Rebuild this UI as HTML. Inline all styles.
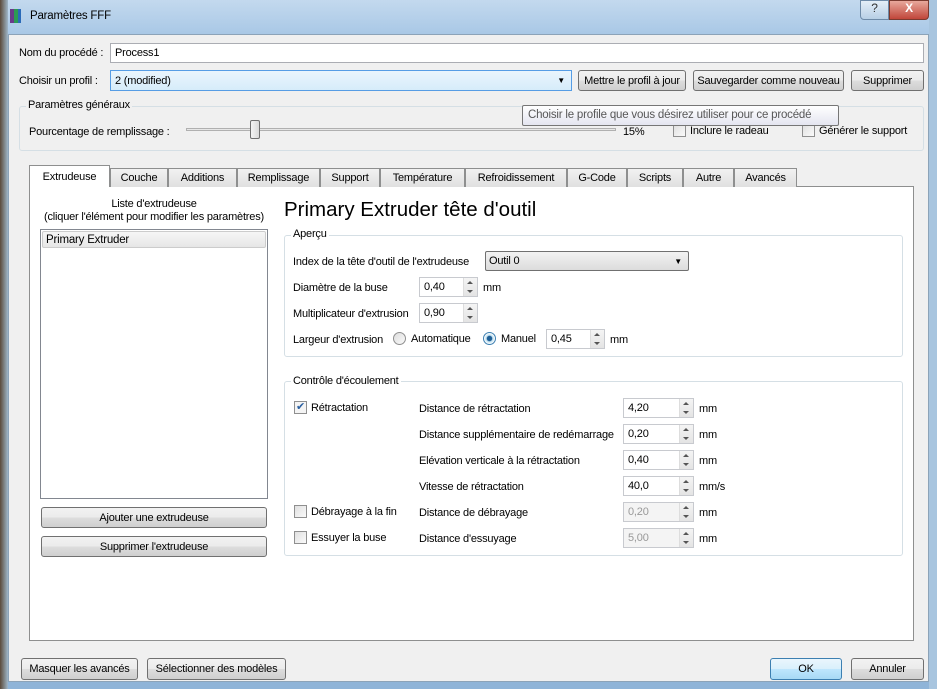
<!DOCTYPE html>
<html><head><meta charset="utf-8"><style>
*{box-sizing:border-box}
body{margin:0;width:937px;height:689px;overflow:hidden;font-family:"Liberation Sans",sans-serif;font-size:11px;letter-spacing:-0.2px;color:#000;position:relative;background:#8fb4d8}
.a{position:absolute;white-space:nowrap}
.btn{position:absolute;white-space:nowrap;border:1px solid #707070;border-radius:3px;background:linear-gradient(#f2f2f2,#ebebeb 50%,#dddddd 51%,#cfcfcf);text-align:center;font-size:11px;padding-top:1px}
.inp{position:absolute;background:#fff;border:1px solid #abadb3;padding-left:4px;padding-top:1px}
.spin{position:absolute;background:#fff;border:1px solid #c8cacf;padding-left:4px;line-height:19px}
.spin i{position:absolute;right:0;top:0;width:14px;height:100%;border-left:1px solid #ddd;background:linear-gradient(#f4f4f4,#e4e4e4)}
.spin i:before{content:"";position:absolute;left:3px;top:3px;border:3px solid transparent;border-bottom:3px solid #555;border-top:0}
.spin i:after{content:"";position:absolute;left:3px;bottom:3px;border:3px solid transparent;border-top:3px solid #555;border-bottom:0}
.dis{color:#999;background:#f4f4f4}
.tab{position:absolute;top:168px;height:19px;border:1px solid #8e8f8f;border-bottom:none;background:linear-gradient(#f2f2f2,#e0e0e0);text-align:center;line-height:19px}
.grp{position:absolute;border:1px solid #d5dfe5;border-radius:3px}
.cb{position:absolute;width:13px;height:13px;border:1px solid #8f8f8f;background:linear-gradient(135deg,#e0e0e0,#fafafa)}
</style></head><body>
<div class="a" style="left:0;top:0;width:937px;height:34px;background:linear-gradient(#c3d9ee,#a9c8e6)"></div>
<div class="a" style="left:0;top:0;width:8px;height:689px;background:linear-gradient(90deg,#5b4a3a,#9fb7c9)"></div>
<div class="a" style="left:929px;top:0;width:8px;height:689px;background:#a8c5df"></div>
<div class="a" style="left:10px;top:9px;width:4px;height:14px;background:#6a3a8a"></div>
<div class="a" style="left:14px;top:9px;width:4px;height:14px;background:#2c9a54"></div>
<div class="a" style="left:18px;top:9px;width:3px;height:14px;background:#2a6ab8"></div>
<div class="a" style="left:30px;top:10px;font-size:11.5px">Paramètres FFF</div>
<div class="a" style="left:860px;top:0;width:29px;height:20px;border:1px solid #6d8aa8;border-radius:0 0 0 4px;background:linear-gradient(#e4eef8,#b7cfe6);text-align:center;font-size:12px;color:#333">?</div>
<div class="a" style="left:889px;top:0;width:40px;height:20px;border:1px solid #7a3a30;border-radius:0 0 4px 0;background:linear-gradient(#e8a89c,#c0463a);text-align:center;font-weight:bold;color:#fff;font-size:12px">X</div>
<div class="a" style="left:8px;top:34px;width:921px;height:648px;background:#f0f0f0;border:1px solid #8ca3b8"></div>

<div class="a" style="left:19px;top:47px">Nom du procédé :</div>
<div class="inp" style="left:110px;top:43px;width:814px;height:20px;line-height:17px">Process1</div>
<div class="a" style="left:19px;top:75px">Choisir un profil :</div>
<div class="inp" style="left:110px;top:70px;width:462px;height:21px;line-height:18px;border-color:#569de5;background:linear-gradient(#eaf5fd,#d6ecfa)">2 (modified)<span style="position:absolute;right:6px;font-size:8px">▼</span></div>
<div class="btn" style="left:578px;top:70px;width:108px;height:21px;line-height:18px">Mettre le profil à jour</div>
<div class="btn" style="left:693px;top:70px;width:151px;height:21px;line-height:18px">Sauvegarder comme nouveau</div>
<div class="btn" style="left:851px;top:70px;width:73px;height:21px;line-height:18px">Supprimer</div>

<div class="grp" style="left:19px;top:106px;width:905px;height:45px"></div>
<div class="a" style="left:26px;top:99px;background:#f0f0f0;padding:0 2px">Paramètres généraux</div>
<div class="a" style="left:29px;top:126px">Pourcentage de remplissage :</div>
<div class="a" style="left:186px;top:128px;width:430px;height:3px;border:1px solid #b0b0b0;background:#e7e7e7"></div>
<div class="a" style="left:250px;top:120px;width:10px;height:19px;border:1px solid #707070;border-radius:2px;background:linear-gradient(90deg,#f4f4f4,#dadada)"></div>
<div class="a" style="left:623px;top:126px">15%</div>
<div class="cb" style="left:673px;top:124px"></div><div class="a" style="left:690px;top:125px">Inclure le radeau</div>
<div class="cb" style="left:802px;top:124px"></div><div class="a" style="left:819px;top:125px">Générer le support</div>
<div class="a" style="left:522px;top:105px;width:317px;height:21px;border:1px solid #767676;border-radius:2px;background:linear-gradient(#fff,#e4e5f0);padding-left:5px;line-height:19px;color:#575757;font-size:11.5px">Choisir le profile que vous désirez utiliser pour ce procédé</div>

<div class="a" style="left:29px;top:186px;width:885px;height:455px;background:#fff;border:1px solid #8e8f8f"></div>
<div class="tab" style="left:29px;top:165px;height:22px;width:81px;background:#fff;z-index:2;line-height:22px">Extrudeuse</div>
<div class="tab" style="left:110px;width:58px">Couche</div>
<div class="tab" style="left:168px;width:69px">Additions</div>
<div class="tab" style="left:237px;width:83px">Remplissage</div>
<div class="tab" style="left:320px;width:60px">Support</div>
<div class="tab" style="left:380px;width:85px">Température</div>
<div class="tab" style="left:465px;width:102px">Refroidissement</div>
<div class="tab" style="left:567px;width:60px">G-Code</div>
<div class="tab" style="left:627px;width:56px">Scripts</div>
<div class="tab" style="left:683px;width:51px">Autre</div>
<div class="tab" style="left:734px;width:63px">Avancés</div>

<div class="a" style="left:40px;top:198px;width:228px;text-align:center;line-height:13px">Liste d'extrudeuse<br>(cliquer l'élément pour modifier les paramètres)</div>
<div class="a" style="left:40px;top:229px;width:228px;height:270px;border:1px solid #828790;background:#fff"></div>
<div class="a" style="left:42px;top:231px;width:224px;height:17px;border:1px solid #ccc;border-radius:2px;background:linear-gradient(#f6f6f6,#e6e6e6);padding-left:3px;line-height:16px;font-size:11.5px">Primary Extruder</div>
<div class="btn" style="left:41px;top:507px;width:226px;height:21px;line-height:18px">Ajouter une extrudeuse</div>
<div class="btn" style="left:41px;top:536px;width:226px;height:21px;line-height:18px">Supprimer l'extrudeuse</div>

<div class="a" style="left:284px;top:198px;font-size:20.5px;letter-spacing:0">Primary Extruder tête d'outil</div>

<div class="grp" style="left:284px;top:235px;width:619px;height:122px"></div>
<div class="a" style="left:291px;top:228px;background:#fff;padding:0 2px">Aperçu</div>
<div class="a" style="left:293px;top:256px">Index de la tête d'outil de l'extrudeuse</div>
<div class="a" style="left:485px;top:251px;width:204px;height:20px;border:1px solid #707070;border-radius:2px;background:linear-gradient(#f2f2f2,#dcdcdc);padding-left:3px;line-height:19px">Outil 0<span style="position:absolute;right:6px;font-size:8px">▼</span></div>
<div class="a" style="left:293px;top:282px">Diamètre de la buse</div>
<div class="spin" style="left:419px;top:277px;width:59px;height:20px">0,40<i></i></div><div class="a" style="left:483px;top:282px">mm</div>
<div class="a" style="left:293px;top:308px">Multiplicateur d'extrusion</div>
<div class="spin" style="left:419px;top:303px;width:59px;height:20px">0,90<i></i></div>
<div class="a" style="left:293px;top:334px">Largeur d'extrusion</div>
<div class="a" style="left:393px;top:332px;width:13px;height:13px;border:1px solid #8f8f8f;border-radius:50%;background:linear-gradient(135deg,#ddd,#fafafa)"></div>
<div class="a" style="left:411px;top:333px">Automatique</div>
<div class="a" style="left:483px;top:332px;width:13px;height:13px;border:1px solid #3c7fb1;border-radius:50%;background:radial-gradient(#1f5f96 30%,#bde 40%,#fff 70%)"></div>
<div class="a" style="left:501px;top:333px">Manuel</div>
<div class="spin" style="left:546px;top:329px;width:59px;height:20px">0,45<i></i></div><div class="a" style="left:610px;top:334px">mm</div>

<div class="grp" style="left:284px;top:381px;width:619px;height:175px"></div>
<div class="a" style="left:291px;top:375px;background:#fff;padding:0 2px">Contrôle d'écoulement</div>
<div class="cb" style="left:294px;top:401px;background:#f4f4f4;font-size:11px;line-height:10px;text-align:center;color:#2a5fa0">✔</div><div class="a" style="left:311px;top:402px">Rétractation</div>
<div class="a" style="left:419px;top:403px">Distance de rétractation</div>
<div class="spin" style="left:623px;top:398px;width:71px;height:20px">4,20<i></i></div><div class="a" style="left:699px;top:403px">mm</div>
<div class="a" style="left:419px;top:429px">Distance supplémentaire de redémarrage</div>
<div class="spin" style="left:623px;top:424px;width:71px;height:20px">0,20<i></i></div><div class="a" style="left:699px;top:429px">mm</div>
<div class="a" style="left:419px;top:455px">Elévation verticale à la rétractation</div>
<div class="spin" style="left:623px;top:450px;width:71px;height:20px">0,40<i></i></div><div class="a" style="left:699px;top:455px">mm</div>
<div class="a" style="left:419px;top:481px">Vitesse de rétractation</div>
<div class="spin" style="left:623px;top:476px;width:71px;height:20px">40,0<i></i></div><div class="a" style="left:699px;top:481px">mm/s</div>
<div class="cb" style="left:294px;top:505px"></div><div class="a" style="left:311px;top:506px">Débrayage à la fin</div>
<div class="a" style="left:419px;top:507px">Distance de débrayage</div>
<div class="spin dis" style="left:623px;top:502px;width:71px;height:20px">0,20<i></i></div><div class="a" style="left:699px;top:507px">mm</div>
<div class="cb" style="left:294px;top:531px"></div><div class="a" style="left:311px;top:532px">Essuyer la buse</div>
<div class="a" style="left:419px;top:533px">Distance d'essuyage</div>
<div class="spin dis" style="left:623px;top:528px;width:71px;height:20px">5,00<i></i></div><div class="a" style="left:699px;top:533px">mm</div>

<div class="btn" style="left:21px;top:658px;width:117px;height:22px;line-height:19px">Masquer les avancés</div>
<div class="btn" style="left:147px;top:658px;width:139px;height:22px;line-height:19px">Sélectionner des modèles</div>
<div class="btn" style="left:770px;top:658px;width:72px;height:22px;line-height:19px;border-color:#3c7fb1;background:linear-gradient(#eaf6fd,#d9f0fc 50%,#bee6fd 51%,#a7d9f5)">OK</div>
<div class="btn" style="left:851px;top:658px;width:73px;height:22px;line-height:19px">Annuler</div>
</body></html>
